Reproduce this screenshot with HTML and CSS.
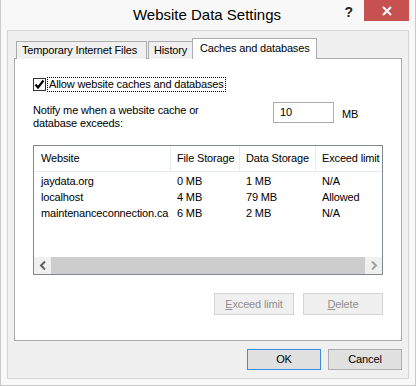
FILE: index.html
```html
<!DOCTYPE html>
<html>
<head>
<meta charset="utf-8">
<link rel="stylesheet" href="styles.css">
</head>
<body>
<div class="window">
  <div class="titlebar">
    <div class="title">Website Data Settings</div>
    <div class="help">?</div>
    <div class="close">
      <svg width="12" height="12" viewBox="0 0 12 12"><path d="M2 2 L10 10 M10 2 L2 10" stroke="#fff" stroke-width="2" fill="none"/></svg>
    </div>
  </div>
  <div class="client">
    <div class="tabs">
      <div class="tab first">Temporary Internet Files</div>
      <div class="tab second">History</div>
      <div class="tab active">Caches and databases</div>
    </div>
    <div class="panel">
      <div class="check-row">
        <span class="checkbox">
          <svg width="11" height="11" viewBox="0 0 11 11"><path d="M1.5 5.5 L4 8.5 L9.5 1.5" stroke="#000" stroke-width="2.2" fill="none"/></svg>
        </span>
        <span class="check-label">Allow website caches and databases</span>
      </div>
      <div class="notify-row">
        <div class="notify-text">Notify me when a website cache or<br>database exceeds:</div>
        <div class="input">10</div>
        <div class="unit">MB</div>
      </div>
      <div class="listbox">
        <div class="list-header">
          <div class="col c1">Website</div>
          <div class="col c2">File Storage</div>
          <div class="col c3">Data Storage</div>
          <div class="col c4">Exceed limit</div>
        </div>
        <div class="list-body">
          <div class="row"><div class="col c1">jaydata.org</div><div class="col c2">0 MB</div><div class="col c3">1 MB</div><div class="col c4">N/A</div></div>
          <div class="row"><div class="col c1">localhost</div><div class="col c2">4 MB</div><div class="col c3">79 MB</div><div class="col c4">Allowed</div></div>
          <div class="row"><div class="col c1">maintenanceconnection.ca</div><div class="col c2">6 MB</div><div class="col c3">2 MB</div><div class="col c4">N/A</div></div>
        </div>
        <div class="hscroll">
          <div class="arrow"><svg width="8" height="9" viewBox="0 0 8 9"><path d="M6 0.5 L2 4.5 L6 8.5" stroke="#606060" stroke-width="2" fill="none"/></svg></div>
          <div class="thumb"></div>
          <div class="arrow"><svg width="8" height="9" viewBox="0 0 8 9"><path d="M2 0.5 L6 4.5 L2 8.5" stroke="#a0a0a0" stroke-width="2" fill="none"/></svg></div>
        </div>
      </div>
      <div class="panel-buttons">
        <div class="btn disabled"><u>E</u>xceed limit</div>
        <div class="btn disabled"><u>D</u>elete</div>
      </div>
    </div>
    <div class="footer">
      <div class="btn default">OK</div>
      <div class="btn">Cancel</div>
    </div>
  </div>
</div>
</body>
</html>
```
FILE: styles.css
```css
* { box-sizing: border-box; }
html, body {
  margin: 0;
  padding: 0;
  width: 416px;
  height: 386px;
  overflow: hidden;
  background: #f7f7f7;
}
body {
  font-family: "Liberation Sans", Arial, sans-serif;
  font-size: 11px;
  letter-spacing: -0.15px;
  color: #000;
}
.window {
  width: 416px;
  height: 386px;
  background: #f8f8f8;
  border: 1px solid #c9c9c9;
  border-top: none;
  padding: 0 6px;
}
.titlebar {
  position: relative;
  height: 30px;
}
.title {
  text-align: center;
  font-size: 15px;
  letter-spacing: 0;
  line-height: 30px;
  color: #000;
  padding-right: 2px;
}
.help {
  position: absolute;
  top: 4px;
  right: 56px;
  font-size: 14px;
  font-weight: bold;
  color: #222;
}
.close {
  position: absolute;
  top: 0;
  right: 0;
  width: 45px;
  height: 21px;
  background: #c75050;
  display: flex;
  align-items: center;
  justify-content: center;
}
.client {
  height: 349px;
  background: #f0f0f0;
  border: 1px solid #d5d5d5;
  padding: 7px 6px 0 6px;
  display: flex;
  flex-direction: column;
}
.tabs {
  display: flex;
  align-items: flex-end;
  height: 21px;
  padding-left: 2px;
  position: relative;
  z-index: 1;
  margin-bottom: -1px;
}
.tab {
  flex-shrink: 0;
  white-space: nowrap;
  height: 18px;
  border: 1px solid #acacac;
  border-bottom: none;
  background: #f0f0f0;
  padding: 0 5px;
  line-height: 17px;
}
.tab.first { width: 131px; margin-right: 1px; }
.tab.second { width: 45px; }
.tab.active {
  height: 21px;
  width: 125px;
  background: #fff;
  padding: 0 7px;
  line-height: 18px;
  margin-left: -1px;
}
.panel {
  height: 283px;
  background: #fff;
  border: 1px solid #acacac;
  padding: 18px 18px 0 18px;
}
.check-row {
  display: flex;
  align-items: center;
  height: 14px;
}
.checkbox {
  width: 13px;
  height: 13px;
  border: 1px solid #333;
  background: #fff;
  display: flex;
  align-items: center;
  justify-content: center;
}
.check-label {
  margin-left: 2px;
  outline: 1px dotted #000;
  outline-offset: 0;
  line-height: 13px;
  padding: 0 1px;
}
.notify-row {
  display: flex;
  align-items: flex-start;
  margin-top: 11px;
  height: 43px;
}
.notify-text {
  width: 240px;
  line-height: 13px;
  padding-top: 2px;
}
.input {
  width: 61px;
  height: 21px;
  border: 1px solid #acacac;
  padding-left: 6px;
  line-height: 19px;
}
.unit {
  margin-left: 8px;
  line-height: 21px;
  padding-top: 2px;
}
.listbox {
  width: 350px;
  height: 130px;
  border: 1px solid #828790;
  display: flex;
  flex-direction: column;
}
.list-header {
  display: flex;
  height: 26px;
  border-bottom: 1px solid #e5ecf4;
}
.list-header .col {
  line-height: 25px;
  border-right: 1px solid #e5ecf4;
}
.list-header .c4 { border-right: none; }
.col {
  padding-left: 7px;
  white-space: nowrap;
  overflow: hidden;
}
.c1 { width: 137px; }
.c2 { width: 69px; padding-left: 6px; }
.c3 { width: 76px; padding-left: 6px; }
.c4 { flex: 1; padding-left: 6px; }
.list-body {
  flex: 1;
  padding-top: 1px;
}
.row {
  display: flex;
  height: 16px;
  line-height: 16px;
}
.hscroll {
  height: 17px;
  display: flex;
  background: #f0f0f0;
}
.arrow {
  width: 17px;
  display: flex;
  align-items: center;
  justify-content: center;
}
.thumb {
  flex: 1;
  background: #cdcdcd;
}
.panel-buttons {
  display: flex;
  justify-content: flex-end;
  gap: 9px;
  margin-top: 18px;
  width: 350px;
}
.btn {
  width: 80px;
  height: 22px;
  border: 1px solid #adadad;
  background: #e1e1e1;
  text-align: center;
  line-height: 20px;
}
.btn.disabled {
  background: #f0f0f0;
  border-color: #d4d4d4;
  color: #8f8f8f;
}
.footer {
  display: flex;
  justify-content: flex-end;
  gap: 7px;
  margin-top: 8px;
}
.footer .btn {
  width: 74px;
  height: 21px;
  line-height: 19px;
}
.btn.default {
  border-color: #3c8be4;
}
```
